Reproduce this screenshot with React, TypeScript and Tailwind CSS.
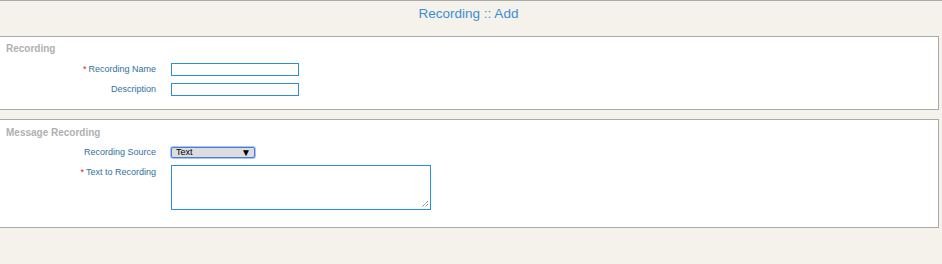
import React from "react";

function Row({ label, required, children, top }: { label: string; required?: boolean; children: React.ReactNode; top?: boolean }) {
  return (
    <div className={`flex ${top ? "items-start" : "items-center"}`}>
      <div className={`w-[157px] shrink-0 text-right text-[9px] leading-[11px] text-[#33709f] ${top ? "pt-[2px]" : ""}`}>
        {required && <span className="text-[#e02020] mr-[2px]">*</span>}
        {label}
      </div>
      <div className="ml-[15px]">{children}</div>
    </div>
  );
}

export default function App() {
  return (
    <div
      className="min-h-[264px] bg-[#f5f2ec] border-t border-[#aaaaaa]"
      style={{ fontFamily: '"Liberation Sans", Arial, sans-serif' }}
    >
      <div className="h-[35px] flex justify-center pt-[5px] pr-[5px]">
        <div className="text-[13.5px] leading-[16px] text-[#3a8fd2]">Recording :: Add</div>
      </div>

      <div className="ml-[-2px] w-[941px] h-[74px] bg-white border border-[#aaaaaa] pt-[6px]">
        <div className="pl-[7px] text-[10px] font-bold leading-[12px] text-[#b0b0b0]">Recording</div>
        <div className="mt-[8px] flex flex-col gap-[7px]">
          <Row label="Recording Name" required>
            <div className="w-[128px] h-[13px] border border-[#2b8fd6] bg-white" />
          </Row>
          <Row label="Description">
            <div className="w-[128px] h-[13px] border border-[#2b8fd6] bg-white" />
          </Row>
        </div>
      </div>

      <div className="mt-[9px] ml-[-2px] w-[941px] h-[109px] bg-white border border-[#aaaaaa] pt-[7px]">
        <div className="pl-[7px] text-[10px] font-bold leading-[12px] text-[#b0b0b0]">Message Recording</div>
        <div className="mt-[8px] flex flex-col gap-[7px]">
          <Row label="Recording Source">
            <div className="w-[84px] h-[11px] border border-[#4a7ae0] rounded-[2px] bg-[#dddddd] flex items-center justify-between pl-[4px] pr-[3px] text-[9px] leading-[9px] text-black shadow-[0_0_0_1px_#a9c4f5]">
              <span>Text</span>
              <span className="text-[10px] leading-[9px]">▼</span>
            </div>
          </Row>
          <Row label="Text to Recording" required top>
            <div className="relative w-[260px] h-[45px] border border-[#2b8fd6] bg-white">
              <svg className="absolute right-[1px] bottom-[1px]" width="8" height="8" viewBox="0 0 8 8">
                <path d="M7 1 L1 7 M7 4 L4 7" stroke="#555" strokeWidth="1" strokeDasharray="1 1" />
              </svg>
            </div>
          </Row>
        </div>
      </div>
    </div>
  );
}
